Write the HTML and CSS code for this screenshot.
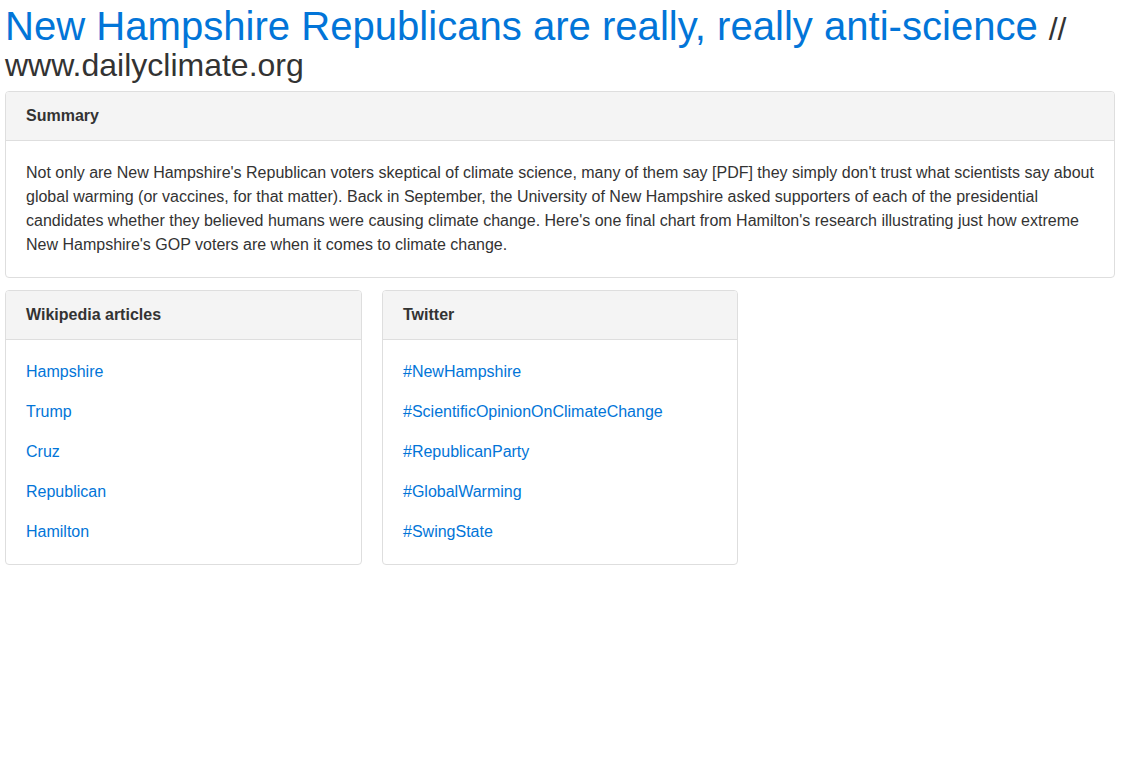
FILE: index.html
```html
<!DOCTYPE html>
<html>
<head>
<meta charset="utf-8">
<link rel="stylesheet" href="styles.css">
</head>
<body>
<div class="page">
  <h1 class="title"><a class="title-link" href="#">New Hampshire Republicans are really, really anti-science</a> // www.dailyclimate.org</h1>
  <section class="panel">
    <div class="panel-heading">Summary</div>
    <div class="panel-body">
      <p class="summary">Not only are New Hampshire's Republican voters skeptical of climate science, many of them say [PDF] they simply don't trust what scientists say about global warming (or vaccines, for that matter). Back in September, the University of New Hampshire asked supporters of each of the presidential candidates whether they believed humans were causing climate change. Here's one final chart from Hamilton's research illustrating just how extreme New Hampshire's GOP voters are when it comes to climate change.</p>
    </div>
  </section>
  <div class="columns">
    <section class="panel">
      <div class="panel-heading">Wikipedia articles</div>
      <ul class="panel-body links">
        <li><a href="#">Hampshire</a></li>
        <li><a href="#">Trump</a></li>
        <li><a href="#">Cruz</a></li>
        <li><a href="#">Republican</a></li>
        <li><a href="#">Hamilton</a></li>
      </ul>
    </section>
    <section class="panel">
      <div class="panel-heading">Twitter</div>
      <ul class="panel-body links">
        <li><a href="#">#NewHampshire</a></li>
        <li><a href="#">#ScientificOpinionOnClimateChange</a></li>
        <li><a href="#">#RepublicanParty</a></li>
        <li><a href="#">#GlobalWarming</a></li>
        <li><a href="#">#SwingState</a></li>
      </ul>
    </section>
  </div>
</div>
</body>
</html>
```
FILE: styles.css
```css
* { box-sizing: border-box; }
html, body { margin: 0; padding: 0; background: #fff; }
body {
  font-family: "Liberation Sans", Arial, sans-serif;
  font-size: 16px;
  line-height: 24px;
  color: #333;
}
.page { padding: 0 15px 0 5px; }
a { color: #0275d8; text-decoration: none; }
.title {
  margin: 0 0 8px;
  font-size: 32px;
  font-weight: normal;
  line-height: 36px;
  padding-top: 8px;
}
.title-link { font-size: 40.1px; line-height: 36px; margin-right: 2px; }
.panel {
  border: 1px solid #dedede;
  border-radius: 4px;
  background: #fff;
  margin-bottom: 12px;
  overflow: hidden;
}
.panel-heading {
  background: #f4f4f4;
  border-bottom: 1px solid #dedede;
  padding: 12px 20px;
  font-weight: bold;
  line-height: 24px;
}
.panel-body { padding: 20px; margin: 0; }
.summary { margin: 0; }
.columns {
  display: grid;
  grid-template-columns: 357px 356px;
  column-gap: 20px;
}
.links { list-style: none; display: flex; flex-direction: column; gap: 16px; }
.links li { line-height: 24px; }
```
